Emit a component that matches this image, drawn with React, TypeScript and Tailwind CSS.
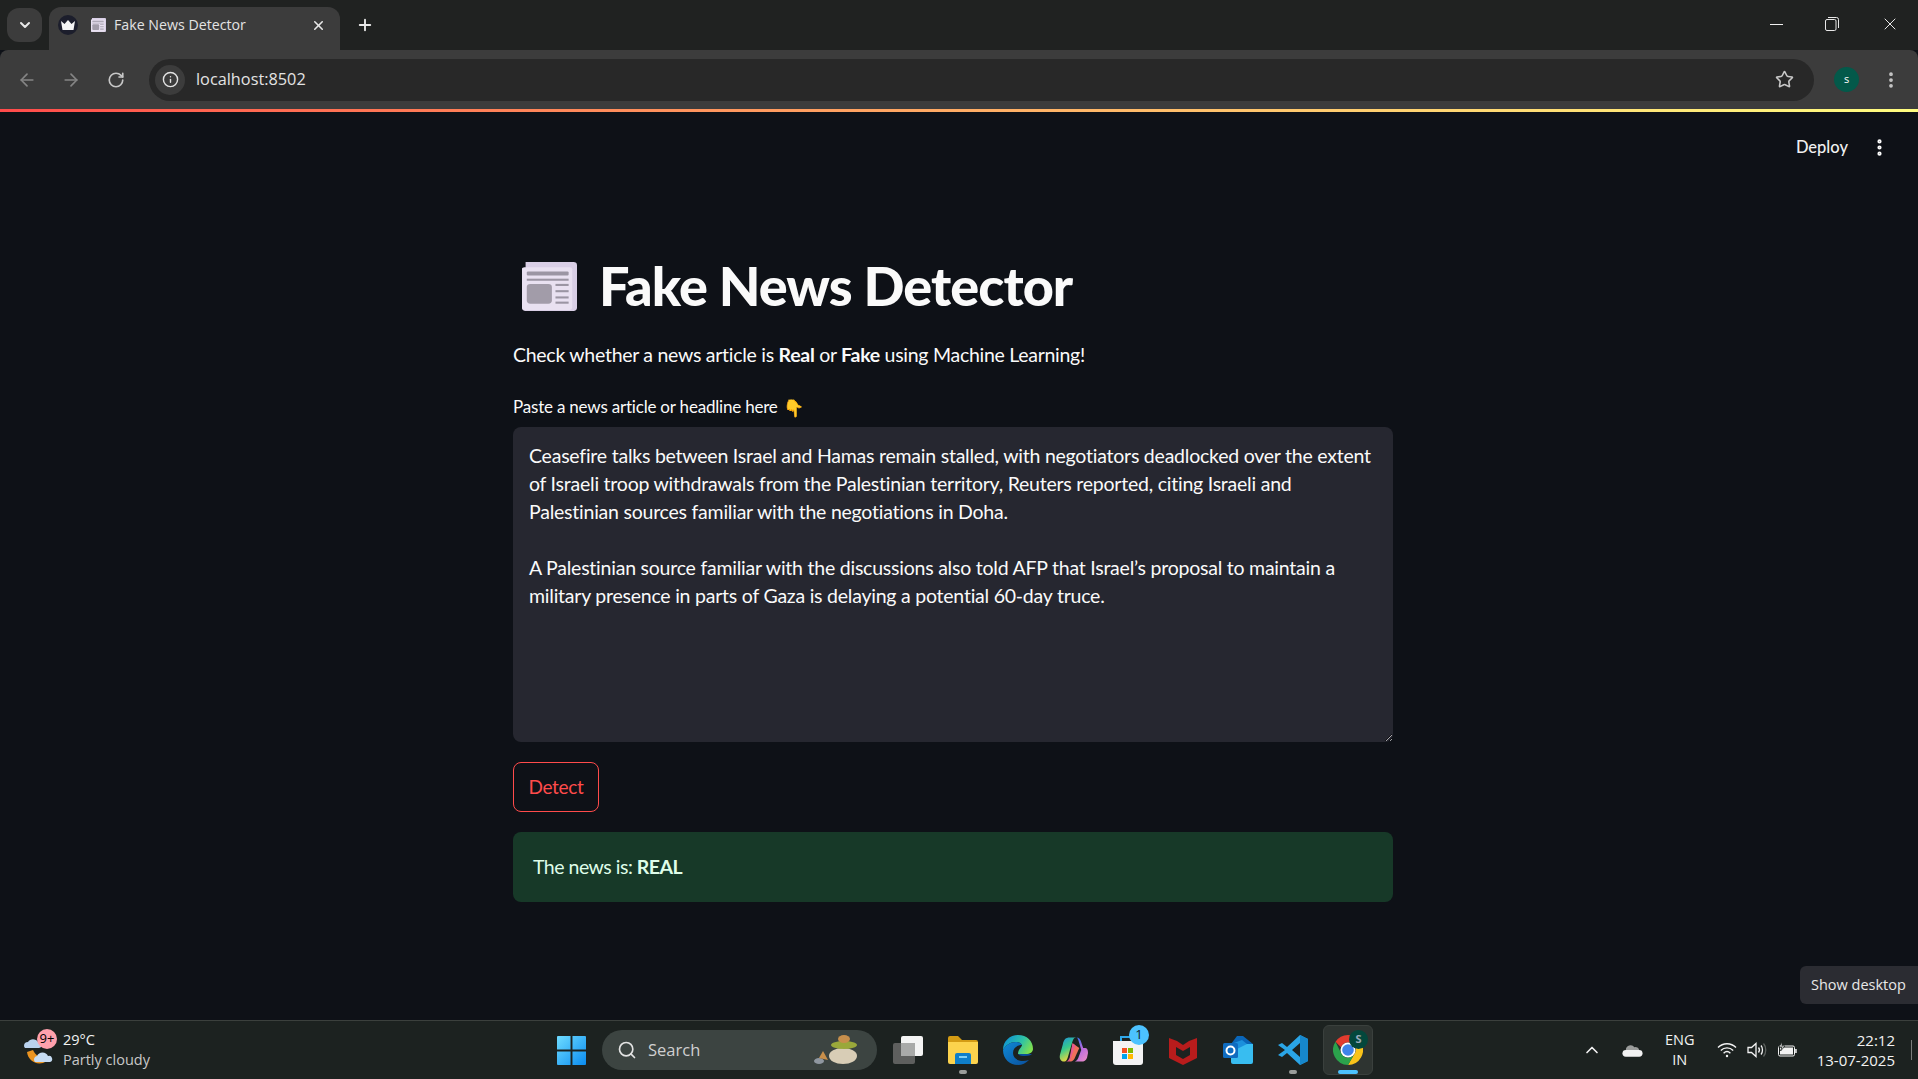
import React from "react";
import { ArrowLeft, ArrowRight, ChevronDown, ChevronUp, EllipsisVertical, Info, Plus, RotateCw, Search, Star, X } from "lucide-react";

const articleText = `Ceasefire talks between Israel and Hamas remain stalled, with negotiators deadlocked over the extent
of Israeli troop withdrawals from the Palestinian territory, Reuters reported, citing Israeli and
Palestinian sources familiar with the negotiations in Doha.

A Palestinian source familiar with the discussions also told AFP that Israel’s proposal to maintain a
military presence in parts of Gaza is delaying a potential 60-day truce.`;

const NewspaperIcon = ({ className }: { className?: string }) => (
  <svg viewBox="0 0 46 47" preserveAspectRatio="none" className={className}>
    <path d="M3 0h40a3 3 0 0 1 3 3v41a3 3 0 0 1-3 3H3a3 3 0 0 1-3-3V6h3z" fill="#d9cfe6" />
    <rect x="0" y="5" width="42" height="41" rx="2" fill="#e9e1f1" />
    <rect x="4" y="9" width="35" height="4" rx="1" fill="#9b95a3" />
    <rect x="4" y="16" width="35" height="2" fill="#9b95a3" />
    <rect x="4" y="21" width="21" height="19" rx="3" fill="#a29ca9" />
    <rect x="28" y="21" width="11" height="2" fill="#9b95a3" />
    <rect x="28" y="27" width="11" height="2" fill="#9b95a3" />
    <rect x="28" y="33" width="11" height="2" fill="#9b95a3" />
    <rect x="28" y="38" width="11" height="2" fill="#9b95a3" />
  </svg>
);

const WindowsLogo = () => (
  <svg viewBox="0 0 30 30" className="h-[29px] w-[29px]">
    <defs>
      <linearGradient id="win" x1="0" y1="0" x2="1" y2="1">
        <stop offset="0" stopColor="#6fdcff" />
        <stop offset="1" stopColor="#0a8cf0" />
      </linearGradient>
    </defs>
    <path d="M1 0h13v14H0V1a1 1 0 0 1 1-1zM16 0h13a1 1 0 0 1 1 1v13H16zM0 16h14v14H1a1 1 0 0 1-1-1zM16 16h14v13a1 1 0 0 1-1 1H16z" fill="url(#win)" />
  </svg>
);

const TaskViewIcon = () => (
  <svg viewBox="0 0 30 28" className="h-[28px] w-[30px]">
    <rect x="0" y="7" width="22" height="21" rx="2" fill="#5e5f5e" />
    <rect x="8" y="0" width="22" height="20" rx="2" fill="#f4f4f4" />
    <rect x="8" y="7" width="14" height="13" fill="#a9aaa9" />
  </svg>
);

const FolderIcon = () => (
  <svg viewBox="0 0 30 28" className="h-[28px] w-[30px]">
    <path d="M0 2a2 2 0 0 1 2-2h8l4 4h14a2 2 0 0 1 2 2v4H0z" fill="#d49c14" />
    <path d="M0 6h30v20a2 2 0 0 1-2 2H2a2 2 0 0 1-2-2z" fill="#fcd34d" />
    <path d="M7 19a2 2 0 0 1 2-2h12a2 2 0 0 1 2 2v9H7z" fill="#0f7fc9" />
    <rect x="11" y="20" width="8" height="2" fill="#7fd0f5" />
  </svg>
);

const EdgeIcon = () => (
  <svg viewBox="0 0 30 30" className="h-[30px] w-[30px]">
    <defs>
      <linearGradient id="edgeTop" x1="0" y1="0.2" x2="1" y2="0.6">
        <stop offset="0" stopColor="#0b8fd8" />
        <stop offset="0.6" stopColor="#2fc3a4" />
        <stop offset="1" stopColor="#7fe04f" />
      </linearGradient>
      <linearGradient id="edgeLow" x1="0" y1="0" x2="1" y2="1">
        <stop offset="0" stopColor="#0f8ad6" />
        <stop offset="1" stopColor="#0a4f9c" />
      </linearGradient>
    </defs>
    <path d="M15 0C24 0 30 6 30 14c0 3-3 5-7 5H15c0-5 4-7 4-9-1-2-3-3-6-3C7 7 3 10 0 15 0 6 7 0 15 0z" fill="url(#edgeTop)" />
    <path d="M0 15c3-5 7-8 13-8 3 0 5 1 6 3-5 0-9 3-9 8 0 6 7 10 16 7-3 3-7 5-11 5C7 30 0 24 0 15z" fill="url(#edgeLow)" />
    <path d="M15 19h14c-1 1-4 2-7 2-3 0-5 0-7-2z" fill="#0a4f9c" />
  </svg>
);

const CopilotIcon = () => (
  <svg viewBox="0 0 30 30" className="h-[30px] w-[29px]">
    <defs>
      <linearGradient id="copA" x1="0" y1="0" x2="0.4" y2="1">
        <stop offset="0" stopColor="#1d8fe0" />
        <stop offset="0.5" stopColor="#36c98c" />
        <stop offset="1" stopColor="#f4d73a" />
      </linearGradient>
      <linearGradient id="copB" x1="0.2" y1="0" x2="0.8" y2="1">
        <stop offset="0" stopColor="#2f6fe8" />
        <stop offset="0.5" stopColor="#b86ce0" />
        <stop offset="1" stopColor="#e889c8" />
      </linearGradient>
    </defs>
    <path d="M11 2h7c-2 0-3 1-4 4l-5 17c-1 3-2 4-4 4-3 0-5-3-4-7l3-11c1-5 3-7 7-7z" fill="url(#copA)" />
    <path d="M18 2c3 0 4 2 5 5l2 6h2c2 0 3 2 3 5l-1 5c-1 3-3 4-6 4H15c2 0 4-1 5-4l3-8-2-7c-1-4-2-6-3-6z" fill="url(#copB)" />
    <path d="M14 8l7 5-5 11c-1 2-3 3-5 3z" fill="#f0705a" />
    <path d="M14 8l3 2-6 17H7c2 0 3-2 4-4z" fill="#e85a8a" />
  </svg>
);

const StoreIcon = () => (
  <div className="relative h-[30px] w-[30px]">
    <svg viewBox="0 0 30 30" className="h-[30px] w-[30px]">
      <path d="M8 6V2h14v4" fill="none" stroke="#2fa8e8" strokeWidth="2" />
      <path d="M0 6h30v21a3 3 0 0 1-3 3H3a3 3 0 0 1-3-3z" fill="#f3f3f3" />
      <rect x="9" y="13" width="5" height="5" fill="#f25022" />
      <rect x="15" y="13" width="5" height="5" fill="#7fba00" />
      <rect x="9" y="19" width="5" height="5" fill="#00a4ef" />
      <rect x="15" y="19" width="5" height="5" fill="#ffb900" />
    </svg>
    <span className="absolute right-[-6px] top-[-10px] flex h-[20px] w-[20px] items-center justify-center rounded-full bg-[#4cc2ff] text-[13px] text-[#10202a]">1</span>
  </div>
);

const McafeeIcon = () => (
  <svg viewBox="0 0 28 30" className="h-[30px] w-[28px]">
    <path d="M0 3l8 3 6 4 6-4 8-3v20l-14 7-14-7z" fill="#b81c1c" />
    <path d="M7 12l7 4 7-4v8l-7 4-7-4z" fill="#1c2220" />
  </svg>
);

const OutlookIcon = () => (
  <svg viewBox="0 0 30 28" className="h-[28px] w-[30px]">
    <path d="M14 0h6l10 8v4L16 12 8 8z" fill="#0a66b8" />
    <path d="M8 8h22v18a2 2 0 0 1-2 2H10a2 2 0 0 1-2-2z" fill="#38bdf0" />
    <path d="M8 8l11-4 5 4-12 6z" fill="#1b90dc" />
    <rect x="0" y="7" width="15" height="15" rx="1.500" fill="#0f6cc0" />
    <circle cx="7.500" cy="14.500" r="4" fill="none" stroke="#fff" strokeWidth="2" />
  </svg>
);

const VsCodeIcon = () => (
  <svg viewBox="0 0 30 30" className="h-[30px] w-[30px]">
    <path d="M22 0l8 4v22l-8 4-13-12-5 4-4-2 7-5-7-5 4-2 5 4zM22 8l-8 7 8 7z" fill="#2aa5e6" />
    <path d="M22 0l8 4v22l-8 4z" fill="#1687cc" />
  </svg>
);

const ChromeIcon = () => (
  <div className="relative h-[30px] w-[30px]">
    <svg viewBox="0 0 30 30" className="h-[30px] w-[30px]">
      <path d="M15 0a15 15 0 0 1 13 7.500H15a7.500 7.500 0 0 0-7 4.700L2.500 6.800A15 15 0 0 1 15 0z" fill="#e33b2e" />
      <path d="M28 7.500A15 15 0 0 1 15 30l6.500-11.200A7.500 7.500 0 0 0 20.500 9.500z" fill="#f9c31a" />
      <path d="M15 30A15 15 0 0 1 2.500 6.800L8.500 19a7.500 7.500 0 0 0 13 -.2z" fill="#2ba24c" />
      <circle cx="15" cy="15" r="7.500" fill="#fff" />
      <circle cx="15" cy="15" r="5.800" fill="#3f84ea" />
    </svg>
    <span className="absolute right-[-5px] top-[-5px] flex h-[19px] w-[19px] items-center justify-center rounded-full bg-[#03473c] text-[11px] font-bold text-[#9ab]">S</span>
  </div>
);

const WeatherIcon = () => (
  <div className="relative h-[36px] w-[34px]">
    <svg viewBox="0 0 34 36" className="h-[36px] w-[34px]">
      <path d="M3 20c1 8 8 13 16 11 3-1 5-3 6-5-6 1-13-1-16-8z" fill="#eb9420" />
      <path d="M0 14a4 4 0 0 1 4-4 6 6 0 0 1 10 0 3 3 0 0 1 1 6H1a3 3 0 0 1-1-2z" fill="#b9d2ee" />
      <path d="M10 28a4 4 0 0 1 3-4 6 6 0 0 1 11 0 3 3 0 0 1 2 6H11a3 3 0 0 1-1-2z" fill="#c6dcf3" />
    </svg>
    <span className="absolute right-[1px] top-[-3px] flex h-[20px] w-[20px] items-center justify-center rounded-full bg-[#ffa1ad] text-[13px] text-black">9+</span>
  </div>
);

const StonesIcon = () => (
  <svg viewBox="0 0 44 30" className="h-[30px] w-[44px]">
    <ellipse cx="6" cy="26" rx="5" ry="3" fill="#8f97a0" />
    <path d="M6 23l4-7 5 9z" fill="#c98f4a" />
    <ellipse cx="30" cy="21" rx="14" ry="8" fill="#d8cdb6" />
    <ellipse cx="31" cy="10" rx="13" ry="4" fill="#9aa83a" />
    <ellipse cx="31" cy="4" rx="6" ry="4" fill="#c78f4c" />
  </svg>
);

const TrayCloud = () => (
  <svg viewBox="0 0 22 14" className="h-[14px] w-[21px]">
    <path d="M4 7a5 5 0 0 1 9-3 4 4 0 0 1 5 3z" fill="#9a9c9b" />
    <path d="M4 14a3.500 3.500 0 0 1 0-7h14a3.500 3.500 0 0 1 0 7z" fill="#f2f2f2" />
  </svg>
);

const WifiIcon = () => (
  <svg viewBox="0 0 20 16" className="h-[16px] w-[20px]" fill="none" stroke="#f2f2f2" strokeWidth="1.400">
    <path d="M1 5.500c5-5 13-5 18 0" />
    <path d="M3.800 8.500c3.500-3.500 8.900-3.500 12.400 0" />
    <path d="M6.600 11.300c2-2 4.800-2 6.800 0" />
    <circle cx="10" cy="14" r="1.200" fill="#f2f2f2" stroke="none" />
  </svg>
);

const SpeakerIcon = () => (
  <svg viewBox="0 0 20 16" className="h-[16px] w-[20px]" fill="none" stroke="#f2f2f2" strokeWidth="1.300">
    <path d="M1 5.500h3.500L9 1.500v13l-4.500-4H1z" />
    <path d="M11.500 5.500c1.200 1.500 1.200 3.500 0 5" />
    <path d="M14 3.500c2 2.500 2 6.500 0 9" />
    <path d="M16.500 1.500c3 3.500 3 9.500 0 13" stroke="#5c615e" />
  </svg>
);

const BatteryIcon = () => (
  <svg viewBox="0 0 20 16" className="h-[16px] w-[20px]">
    <path d="M3 4h13a1.500 1.500 0 0 1 1.500 1.500v7A1.500 1.500 0 0 1 16 14H3a1.500 1.500 0 0 1-1.500-1.500v-7A1.500 1.500 0 0 1 3 4z" fill="#1c2220" stroke="#f2f2f2" />
    <rect x="3" y="5.500" width="13" height="7" fill="#f2f2f2" />
    <rect x="18.200" y="7" width="1.500" height="4" fill="#f2f2f2" />
    <path d="M5 0L2 5h3l-1.500 4L8 4H5z" fill="#f2f2f2" stroke="#1c2220" strokeWidth="0.800" />
  </svg>
);

const TaskbarApp = ({ children, dot, active }: { children: React.ReactNode; dot?: boolean; active?: boolean }) => (
  <div className={`relative flex h-[50px] w-[50px] items-center justify-center rounded-md ${active ? "border border-[#3a403d] bg-[#2e3431]" : ""}`}>
    {children}
    {dot && <span className="absolute bottom-[1px] h-[4px] w-[8px] rounded-full bg-[#9a9d9b]" />}
    {active && <span className="absolute bottom-0 h-[4px] w-[20px] rounded-full bg-[#4cc2ff]" />}
  </div>
);

export default function App() {
  return (
    <div className="relative flex h-[1079px] w-[1918px] flex-col overflow-hidden bg-[#0e1117] font-['Lato',sans-serif] text-[#fafafa]">
      {/* Browser tab strip */}
      <div className="flex h-[50px] shrink-0 items-end bg-[#202221] font-['Open_Sans',sans-serif]">
        <div className="mb-[8px] ml-[7px] flex h-[34px] w-[35px] items-center justify-center rounded-xl bg-[#3c3c3c]">
          <ChevronDown size={16} strokeWidth={3} className="text-[#e8e8e8]" />
        </div>
        <div className="ml-[7px] flex h-[43px] w-[291px] items-center rounded-t-xl bg-[#3c3c3c] pb-[7px] pl-[9px] pr-[14px]">
          <span className="flex h-[20px] w-[20px] items-center justify-center rounded-full bg-[#1c1e2c]">
            <svg viewBox="0 0 14 10" className="h-[10px] w-[14px]">
              <path d="M0 1l3.500 3L7 0l3.500 4L14 1l-1.500 9h-11z" fill="#f4f4f4" />
            </svg>
          </span>
          <NewspaperIcon className="ml-[13px] h-[14px] w-[15px]" />
          <span className="ml-[8px] text-[14.200px] text-[#e3e3e3]">Fake News Detector</span>
          <X size={15} strokeWidth={2.500} className="ml-auto text-[#e8e8e8]" />
        </div>
        <Plus size={18} strokeWidth={2.500} className="mb-[16px] ml-[16px] text-[#e8e8e8]" />
        <div className="mb-[16px] ml-auto flex items-center pr-[18px] text-[#e8e8e8]">
          <span className="h-px w-[13px] bg-[#f0f0f0]" />
          <svg viewBox="0 0 14 14" className="ml-[42px] h-[14px] w-[14px]" fill="none" stroke="#e8e8e8">
            <rect x="0.500" y="2.500" width="10.500" height="11" rx="1.500" />
            <path d="M3 .500h8.500a2 2 0 0 1 2 2V11" />
          </svg>
          <X size={20} strokeWidth={1.200} className="ml-[41px]" />
        </div>
      </div>

      {/* Browser toolbar */}
      <div className="flex h-[59px] shrink-0 items-center rounded-t-lg bg-[#3c3c3c] font-['Open_Sans',sans-serif]">
        <ArrowLeft size={20} className="ml-[17px] text-[#858585]" />
        <ArrowRight size={20} className="ml-[24px] text-[#858585]" />
        <RotateCw size={18} strokeWidth={2.200} className="ml-[26px] text-[#c7c7c7]" />
        <div className="ml-[24px] flex h-[42px] w-[1665px] items-center rounded-full bg-[#282828] pl-[6px] pr-[20px]">
          <span className="flex h-[30px] w-[30px] items-center justify-center rounded-full bg-[#3c3c3c]">
            <Info size={17} strokeWidth={2} className="text-[#e3e3e3]" />
          </span>
          <span className="ml-[11px] text-[16.300px] text-[#e3e3e3]">localhost:8502</span>
          <Star size={19} strokeWidth={2} className="ml-auto text-[#c7c7c7]" />
        </div>
        <span className="ml-[20px] flex h-[25px] w-[25px] items-center justify-center rounded-full bg-[#03594a] text-[11px] text-white">s</span>
        <EllipsisVertical size={20} strokeWidth={2.500} className="ml-[22px] text-[#c7c7c7]" />
      </div>

      {/* Streamlit decoration line */}
      <div className="h-[3px] shrink-0 bg-gradient-to-r from-[#ff4b4b] to-[#fffd80]" />

      {/* App body */}
      <main className="flex min-h-0 flex-1 flex-col">
        <div className="flex h-[70px] items-center justify-end pr-[28px] pt-[1px]">
          <span className="text-[16.500px] font-medium text-[#f0f0f0]">Deploy</span>
          <EllipsisVertical size={21} strokeWidth={2.800} className="ml-[21px] text-[#fafafa]" />
        </div>

        <div className="ml-[513px] flex w-[880px] flex-col">
          <h1 className="mt-[71px] flex h-[66px] items-center text-[54px] font-black leading-none tracking-[-0.950px]">
            <NewspaperIcon className="ml-[9px] h-[49px] w-[55px]" />
            <span className="ml-[22px]">Fake News Detector</span>
          </h1>
          <p className="mt-[22px] text-[19.500px] leading-[28px] tracking-[-0.280px]">
            Check whether a news article is <strong className="font-bold">Real</strong> or <strong className="font-bold">Fake</strong> using Machine Learning!
          </p>
          <label className="mt-[26px] flex h-[24px] items-center text-[17px] tracking-[-0.200px]">
            Paste a news article or headline here <span className="ml-[5px] text-[17px] font-['Noto_Sans_CJK_SC',sans-serif]">👇</span>
          </label>
          <textarea
            readOnly
            wrap="off"
            value={articleText}
            className="mt-[8px] h-[315px] w-full resize-y overflow-hidden rounded-lg bg-[#262730] px-[16px] pb-[14px] pt-[15px] text-[19.500px] leading-[28px] tracking-[-0.230px] text-[#fafafa] outline-none"
          />
          <button className="mt-[20px] h-[50px] w-[86px] rounded-lg border border-[#ff4b4b] bg-[#0e1117] text-[19px] tracking-[-0.300px] text-[#ff4b4b]">Detect</button>
          <div className="mt-[20px] flex h-[70px] items-center rounded-lg bg-[#173928] px-[20px] text-[19.500px] tracking-[-0.500px] text-[#dffde9]">
            <span>The news is: <strong className="font-bold">REAL</strong></span>
          </div>
        </div>
      </main>

      {/* Tooltip from the taskbar */}
      <div className="absolute right-0 top-[966px] flex h-[38px] w-[118px] items-center rounded-l-md bg-[#2b2c32] pl-[11px] font-['Open_Sans',sans-serif] text-[14.500px] text-[#e8e8e8]">
        Show desktop
      </div>

      {/* Windows taskbar */}
      <footer className="flex h-[59px] shrink-0 items-center border-t border-[#3b403d] bg-[#1c2220] font-['Open_Sans',sans-serif]">
        <div className="flex w-[557px] items-center pl-[24px]">
          <WeatherIcon />
          <div className="ml-[5px] flex flex-col text-[14.500px] leading-[20px]">
            <span className="text-[#f2f2f2]">29°C</span>
            <span className="text-[#c8c8c8]">Partly cloudy</span>
          </div>
        </div>
        <WindowsLogo />
        <div className="ml-[16px] flex h-[40px] w-[275px] items-center rounded-full bg-[#3c4441] pl-[15px] pr-[20px]">
          <Search size={20} strokeWidth={2} className="text-[#e3e3e3]" />
          <span className="ml-[11px] text-[16.500px] text-[#d0d0d0]">Search</span>
          <span className="ml-auto"><StonesIcon /></span>
        </div>
        <div className="ml-[6px] flex items-center gap-[5px]">
          <TaskbarApp><TaskViewIcon /></TaskbarApp>
          <TaskbarApp dot><FolderIcon /></TaskbarApp>
          <TaskbarApp><EdgeIcon /></TaskbarApp>
          <TaskbarApp><CopilotIcon /></TaskbarApp>
          <TaskbarApp><StoreIcon /></TaskbarApp>
          <TaskbarApp><McafeeIcon /></TaskbarApp>
          <TaskbarApp><OutlookIcon /></TaskbarApp>
          <TaskbarApp dot><VsCodeIcon /></TaskbarApp>
          <TaskbarApp active><ChromeIcon /></TaskbarApp>
        </div>
        <div className="ml-auto flex items-center pr-[6px] text-[#f2f2f2]">
          <ChevronUp size={20} strokeWidth={2} />
          <span className="ml-[20px]"><TrayCloud /></span>
          <div className="ml-[14px] flex w-[46px] flex-col items-center text-[14.500px] leading-[20px]">
            <span>ENG</span>
            <span>IN</span>
          </div>
          <span className="ml-[14px]"><WifiIcon /></span>
          <span className="ml-[10px]"><SpeakerIcon /></span>
          <span className="ml-[10px]"><BatteryIcon /></span>
          <div className="ml-[20px] flex flex-col items-end text-[15px] leading-[20px]">
            <span>22:12</span>
            <span>13-07-2025</span>
          </div>
          <span className="ml-[16px] h-[20px] w-px bg-[#7a7d7b]" />
        </div>
      </footer>
    </div>
  );
}
